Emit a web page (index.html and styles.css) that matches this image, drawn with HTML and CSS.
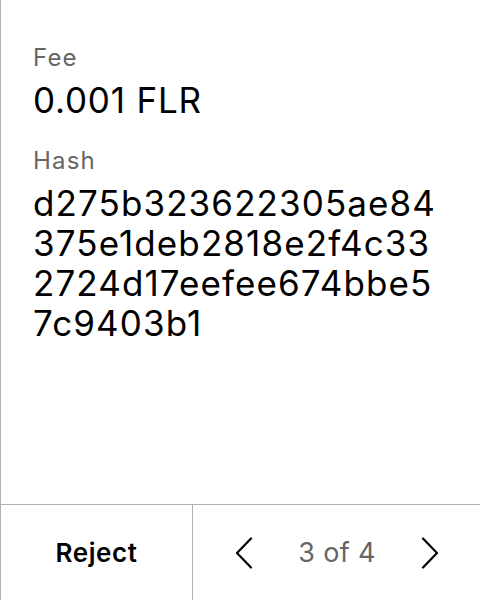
FILE: index.html
```html
<!DOCTYPE html>
<html>
<head>
<meta charset="utf-8">
<link rel="stylesheet" href="styles.css">
</head>
<body>
<div class="screen">
  <div class="content">
    <div class="label">Fee</div>
    <div class="value">0.001 FLR</div>
    <div class="label label-gap">Hash</div>
    <div class="value hash">d275b323622305ae84375e1deb2818e2f4c332724d17eefee674bbe57c9403b1</div>
  </div>
  <div class="footer">
    <div class="reject">Reject</div>
    <div class="pager">
      <svg class="chev" width="18" height="32" viewBox="0 0 18 32"><path d="M16 1.5 L2 16 L16 30.5" fill="none" stroke="#000" stroke-width="2.2" stroke-linecap="round" stroke-linejoin="round"/></svg>
      <span class="count">3 of 4</span>
      <svg class="chev" width="18" height="32" viewBox="0 0 18 32"><path d="M2 1.5 L16 16 L2 30.5" fill="none" stroke="#000" stroke-width="2.2" stroke-linecap="round" stroke-linejoin="round"/></svg>
    </div>
  </div>
</div>
</body>
</html>
```

FILE: styles.css
```css
html, body {
  margin: 0;
  padding: 0;
  background: #fff;
}
body {
  font-family: Inter, "Noto Sans", sans-serif;
  color: #000;
}
.screen {
  width: 480px;
  height: 600px;
  box-sizing: border-box;
  border-left: 1px solid #b3b3b3;
  display: flex;
  flex-direction: column;
}
.content {
  flex: 1;
  padding: 43px 32px 0 32px;
}
.label {
  font-size: 24px;
  line-height: 30px;
  letter-spacing: 1.2px;
  color: #666;
}
.label-gap {
  margin-top: 26px;
}
.value {
  font-size: 35px;
  line-height: 40px;
  letter-spacing: 0.8px;
  margin-top: 7px;
}
.hash {
  word-break: break-all;
  letter-spacing: 1.1px;
  margin-top: 7px;
}
.footer {
  height: 96px;
  box-sizing: border-box;
  border-top: 1px solid #b3b3b3;
  display: flex;
}
.reject {
  width: 191px;
  border-right: 1px solid #b3b3b3;
  display: flex;
  align-items: center;
  justify-content: center;
  font-size: 26px;
  font-weight: 600;
  letter-spacing: 0.6px;
}
.pager {
  flex: 1;
  display: flex;
  align-items: center;
  justify-content: space-between;
  padding: 0 41px 0 42px;
}
.count {
  font-size: 27px;
  letter-spacing: 0.3px;
  color: #666;
}
.chev {
  display: block;
}
```
